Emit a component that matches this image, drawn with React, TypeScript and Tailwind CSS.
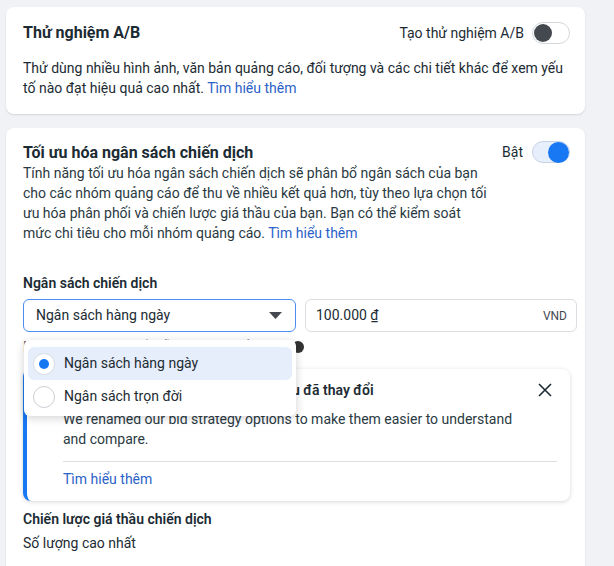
import { useState } from "react";

const LINK = "text-[#2b62c8]";

function Toggle({ on }: { on: boolean }) {
  if (on) {
    return (
      <div className="flex h-[22px] w-[38px] items-center justify-end rounded-full border border-[#c6d3e6] bg-[#e7effc]">
        <div className="h-[21px] w-[21px] rounded-full bg-[#1877f2]" />
      </div>
    );
  }
  return (
    <div className="flex h-[22px] w-[38px] items-center rounded-full border border-[#d4d7db] bg-white pl-[1px]">
      <div className="h-[18px] w-[18px] rounded-full bg-[#444950]" />
    </div>
  );
}

function Radio({ checked }: { checked: boolean }) {
  return (
    <div
      className={
        "flex h-[22px] w-[22px] items-center justify-center rounded-full border bg-white " +
        (checked ? "border-[#d8dde3]" : "border-[#ccd0d5]")
      }
    >
      {checked && <div className="h-[10px] w-[10px] rounded-full bg-[#1877f2]" />}
    </div>
  );
}

export default function App() {
  const [budgetType, setBudgetType] = useState("daily");

  const options = [
    { id: "daily", label: "Ngân sách hàng ngày" },
    { id: "lifetime", label: "Ngân sách trọn đời" },
  ];

  return (
    <div className="min-h-screen bg-[#f0f2f5] pl-[6px] pt-[7px] font-['Roboto',sans-serif] text-[14px] text-[#1c2b33]">
      <div className="flex w-[579px] flex-col gap-[14px]">
        {/* A/B test */}
        <section className="rounded-lg bg-white pb-[16px] pl-[17px] pr-[15px] pt-[15px] shadow-[0_1px_2px_rgba(0,0,0,0.12)]">
          <div className="flex items-center justify-between">
            <h2 className="text-[16px] font-bold leading-5">Thử nghiệm A/B</h2>
            <div className="flex items-center gap-[8px]">
              <span className="leading-5">Tạo thử nghiệm A/B</span>
              <Toggle on={false} />
            </div>
          </div>
          <p className="mt-[14px] leading-5">
            Thử dùng nhiều hình ảnh, văn bản quảng cáo, đối tượng và các chi tiết khác để xem yếu
            <br />
            tố nào đạt hiệu quả cao nhất. <span className={LINK}>Tìm hiểu thêm</span>
          </p>
        </section>

        {/* Campaign budget optimization */}
        <section className="rounded-t-lg bg-white pb-[30px] pl-[17px] pr-[8px] pt-[15px] shadow-[0_1px_2px_rgba(0,0,0,0.12)]">
          <div className="flex items-start justify-between pr-[7px]">
            <div>
              <h2 className="text-[16px] font-bold leading-5">Tối ưu hóa ngân sách chiến dịch</h2>
              <p className="leading-5 text-[#2a3942]">
                Tính năng tối ưu hóa ngân sách chiến dịch sẽ phân bổ ngân sách của bạn
                <br />
                cho các nhóm quảng cáo để thu về nhiều kết quả hơn, tùy theo lựa chọn tối
                <br />
                ưu hóa phân phối và chiến lược giá thầu của bạn. Bạn có thể kiểm soát
                <br />
                mức chi tiêu cho mỗi nhóm quảng cáo. <span className={LINK}>Tìm hiểu thêm</span>
              </p>
            </div>
            <div className="-mt-[2px] flex items-center gap-[9px]">
              <span className="leading-5">Bật</span>
              <Toggle on={true} />
            </div>
          </div>

          <div className="mt-[30px] font-semibold leading-5">Ngân sách chiến dịch</div>

          <div className="mt-[6px] flex gap-[9px]">
            <div className="relative">
              <div className="flex h-[33px] w-[273px] items-center justify-between rounded-md border border-[#4a8ef0] pl-[12px] pr-[13px]">
                <span>Ngân sách hàng ngày</span>
                <svg width="13" height="7" viewBox="0 0 13 7">
                  <path d="M0 0h13L6.5 7z" fill="#444950" />
                </svg>
              </div>

              <div className="absolute left-[1px] top-[41px] z-20 w-[272px] rounded-md bg-white pb-[3px] pt-[7px] shadow-[0_2px_10px_rgba(0,0,0,0.18)]">
                {options.map((o) => (
                  <button
                    key={o.id}
                    onClick={() => setBudgetType(o.id)}
                    className={
                      "mx-[4px] flex h-[33px] w-[264px] items-center gap-[9px] rounded-md pl-[5px] text-left " +
                      (budgetType === o.id ? "bg-[#e6eefb]" : "bg-white")
                    }
                  >
                    <Radio checked={budgetType === o.id} />
                    <span>{o.label}</span>
                  </button>
                ))}
              </div>
            </div>

            <div className="flex h-[33px] w-[272px] items-center justify-between rounded-md border border-[#dadde1] pl-[10px] pr-[9px]">
              <span>100.000 ₫</span>
              <span className="text-[12px] text-[#444950]">VND</span>
            </div>
          </div>

          <div className="mt-[5px] flex h-5 w-[281px] items-center justify-between text-[#606770]">
            <span className="truncate leading-5">Mức chi tiêu thực tế mỗi ngày có thể khác</span>
            <div className="h-[12px] w-[12px] shrink-0 rounded-full bg-[#333]" />
          </div>

          {/* Notice */}
          <div className="mt-[12px] w-[547px] rounded-lg border-l-4 border-[#1877f2] bg-white pb-[12px] pr-[13px] pt-[11px] shadow-[0_1px_4px_rgba(0,0,0,0.16)]">
            <div className="flex items-center pl-[8px]">
              <svg width="16" height="16" viewBox="0 0 16 16">
                <circle cx="8" cy="8" r="8" fill="#1877f2" />
                <rect x="7" y="7" width="2" height="5" fill="#fff" />
                <rect x="7" y="4" width="2" height="2" fill="#fff" />
              </svg>
              <span className="ml-[20px] font-semibold leading-5">
                Tên các tùy chọn chiến lược giá thầu đã thay đổi
              </span>
              <svg className="ml-auto mr-[4px]" width="16" height="16" viewBox="0 0 16 16">
                <path d="M2 2l12 12M14 2L2 14" stroke="#1c2b33" strokeWidth="1.6" />
              </svg>
            </div>
            <div className="pl-[36px]">
              <p className="mt-[9px] leading-5 text-[#2a3942]">
                We renamed our bid strategy options to make them easier to understand
                <br />
                and compare.
              </p>
              <div className="mt-[12px] h-px bg-[#dadde1]" />
              <div className={"mt-[7px] leading-5 " + LINK}>Tìm hiểu thêm</div>
            </div>
          </div>

          <div className="mt-[8px] font-semibold leading-5">Chiến lược giá thầu chiến dịch</div>
          <div className="mt-[4px] leading-5">Số lượng cao nhất</div>
        </section>
      </div>
    </div>
  );
}
